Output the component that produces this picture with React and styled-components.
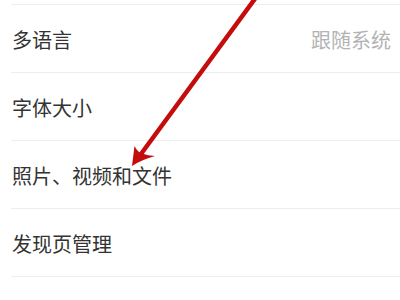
import React from "react";
import styled, { createGlobalStyle } from "styled-components";

const Global = createGlobalStyle`
  html, body { margin: 0; padding: 0; background: #fff; }
  body { font-family: "Noto Sans CJK SC", "Noto Sans", sans-serif; }
`;

const Page = styled.div`
  position: relative;
  width: 400px;
  height: 300px;
  overflow: hidden;
  background: #fff;
`;

const List = styled.div`
  display: flex;
  flex-direction: column;
`;

const TopGap = styled.div`
  height: 4px;
`;

const Divider = styled.div`
  height: 1px;
  margin-left: 11px;
  background: #ededed;
`;

const Row = styled.div`
  height: 67px;
  display: flex;
  align-items: center;
  justify-content: space-between;
  padding: 2px 9px 0 12px;
  box-sizing: border-box;
`;

const Label = styled.span`
  font-size: 20px;
  color: #333;
  letter-spacing: 0;
  line-height: 1;
`;

const Value = styled.span`
  font-size: 20px;
  color: #b3b3b3;
  line-height: 1;
`;

const ArrowSvg = styled.svg`
  position: absolute;
  left: 0;
  top: 0;
  pointer-events: none;
`;

const items = [
  { label: "多语言", value: "跟随系统" },
  { label: "字体大小" },
  { label: "照片、视频和文件" },
  { label: "发现页管理" },
];

export default function App() {
  return (
    <>
      <Global />
      <Page>
        <List>
          <TopGap />
          <Divider />
          {items.map((it) => (
            <React.Fragment key={it.label}>
              <Row>
                <Label>{it.label}</Label>
                {it.value && <Value>{it.value}</Value>}
              </Row>
              <Divider />
            </React.Fragment>
          ))}
        </List>
        <ArrowSvg width="400" height="300" viewBox="0 0 400 300">
          <line x1="257" y1="-4" x2="141" y2="154" stroke="#c40c0c" strokeWidth="4.5" strokeLinecap="round" />
          <path d="M132,166 L134.5,146 Q137.5,152 142,153.5 Q148,155.5 155,156 Q142,159.5 132,166 Z" fill="#c40c0c" />
        </ArrowSvg>
      </Page>
    </>
  );
}
